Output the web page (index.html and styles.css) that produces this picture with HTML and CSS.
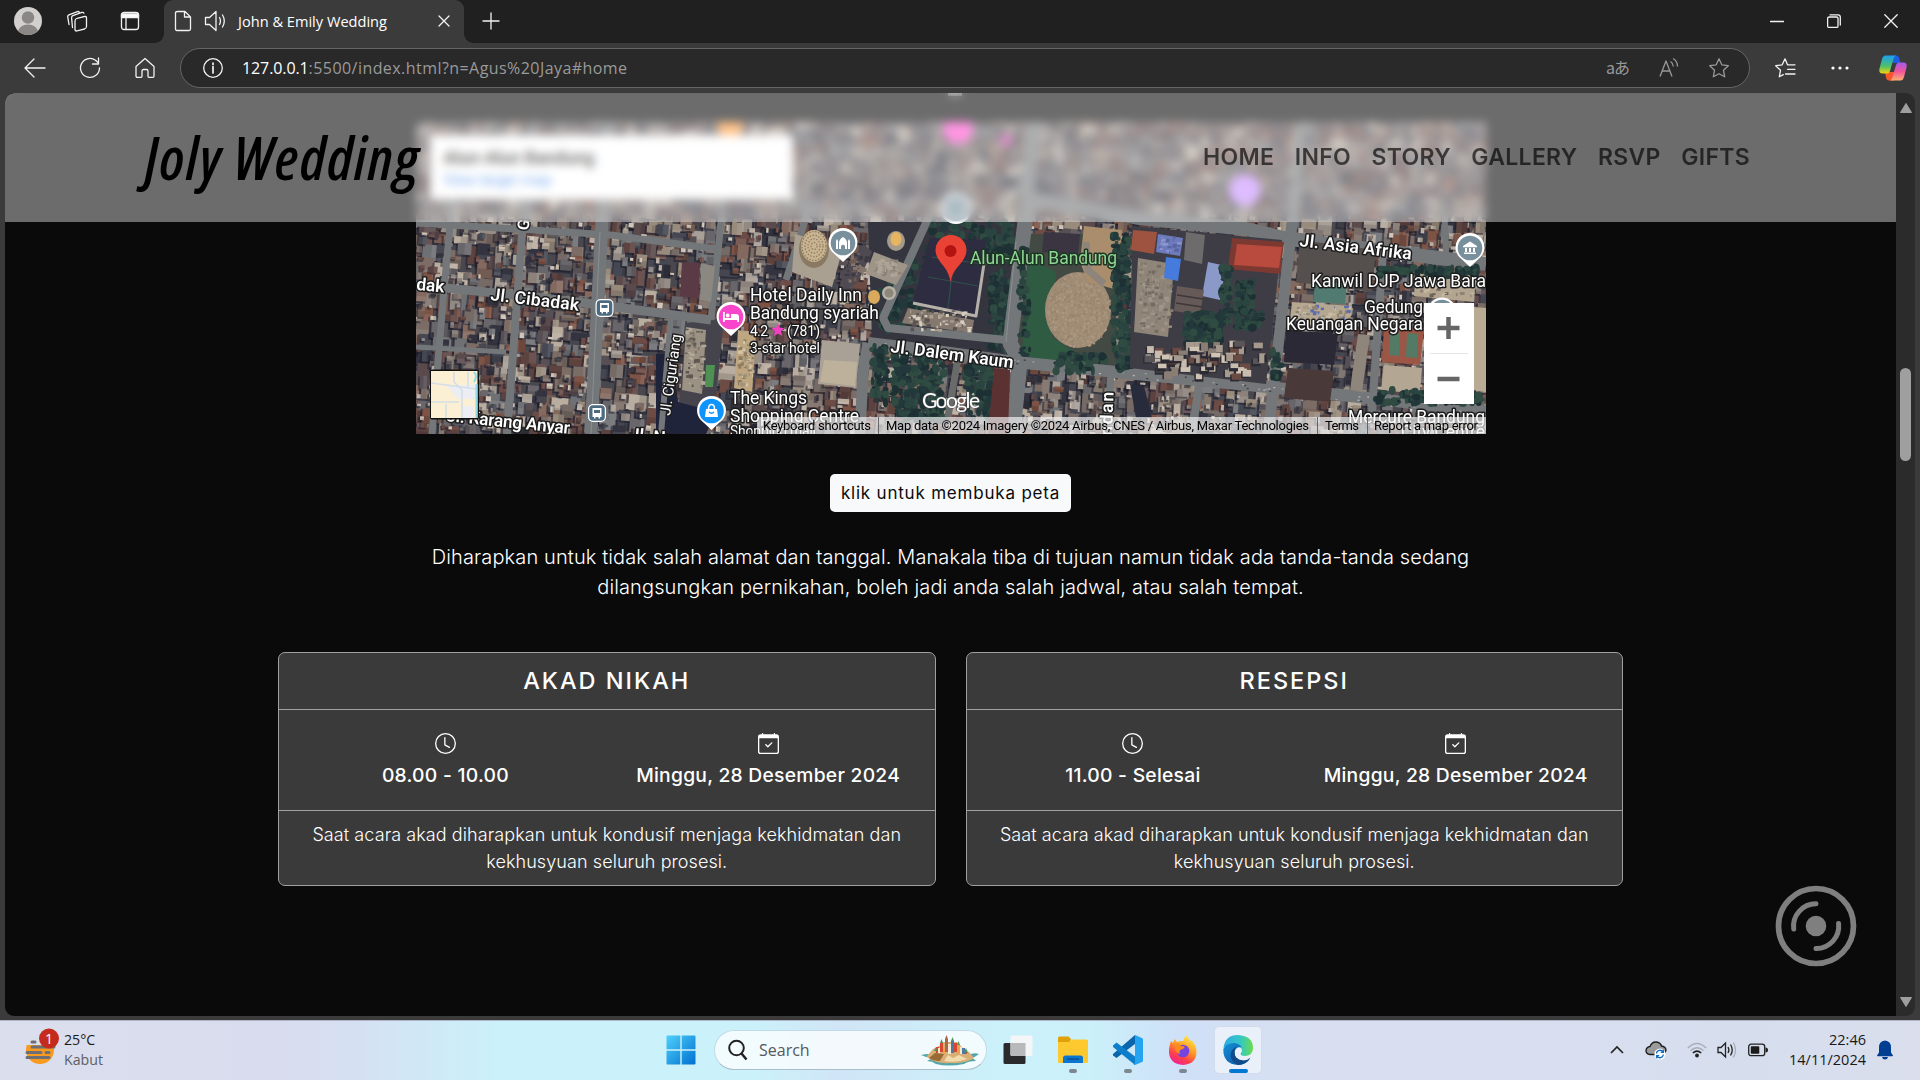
FILE: index.html
```html
<!DOCTYPE html>
<html lang="id">
<head>
<meta charset="utf-8">
<title>John &amp; Emily Wedding</title>
<link rel="stylesheet" href="styles.css">
</head>
<body>
<div class="tabstrip">
  <div class="strip-left">
    <svg width="28" height="28" viewBox="0 0 28 28"><clipPath id="av"><circle cx="14" cy="14" r="14"/></clipPath><g clip-path="url(#av)"><rect width="28" height="28" fill="#d2d0ce"/><circle cx="14" cy="10.5" r="6.2" fill="#8a8784"/><ellipse cx="14" cy="25" rx="10" ry="7.5" fill="#8a8784"/></g></svg>
    <svg class="ln" width="22" height="22" viewBox="0 0 22 22"><rect x="9" y="7.500" width="11.500" height="12.500" rx="2" transform="skewY(-14) translate(0 3.600)"/><path d="M6.500 17.500l-.9-9.600q-.1-1.600 1.300-2.200l9-3.300q1.500-.4 2 .8M3 14.500L1.700 6.800q-.1-1.500 1.200-2L11.500 1.600q1.200-.3 1.700.5"/></svg>
    <svg class="ln" width="20" height="20" viewBox="0 0 20 20"><rect x="1.500" y="1.500" width="17" height="17" rx="2.500"/><path d="M1.500 3h17v3.500h-17zM6 6v12" fill="#fff"/></svg>
  </div>
  <div class="tab">
    <svg class="ln" width="18" height="22" viewBox="0 0 18 22"><path d="M3.500 1.500h7.500l5.500 5.500v12q0 1.500-1.500 1.500H3Q1.500 20.500 1.500 19V3q0-1.500 2-1.500zM10.500 1.500V7h6"/></svg>
    <svg class="ln spk" width="22" height="22" viewBox="0 0 22 22"><path d="M1.500 7.500h4L12 1.500v19l-6.500-6h-4zM15.500 7.500q2 3.500 0 7M18.500 5q3.600 6 0 12"/></svg>
    <span class="tab-title">John &amp; Emily Wedding</span>
    <svg class="ln x" width="12" height="12" viewBox="0 0 12 12"><path d="M1 1l10 10M11 1L1 11"/></svg>
  </div>
  <svg class="ln plus" width="18" height="18" viewBox="0 0 18 18"><path d="M9 1v16M1 9h16"/></svg>
  <div class="winbtns">
    <svg class="ln" width="14" height="14" viewBox="0 0 14 14"><path d="M.5 7.500h13"/></svg>
    <svg class="ln" width="14" height="14" viewBox="0 0 14 14"><rect x=".6" y="3" width="10.400" height="10.400" rx="1.500"/><path d="M3 .8h8q2.300 0 2.300 2.300V11"/></svg>
    <svg class="ln" width="14" height="14" viewBox="0 0 14 14"><path d="M.8.8l12.400 12.400M13.200.8L.8 13.200"/></svg>
  </div>
</div>
<div class="toolbar">
  <div class="navbtns">
    <svg class="ln" width="22" height="22" viewBox="0 0 22 22"><path d="M10 2l-9 9 9 9M1.500 11H21"/></svg>
    <svg class="ln" width="22" height="22" viewBox="0 0 22 22"><path d="M20.500 11A9.500 9.500 0 1 1 16.500 3.200L19.500 6M19.500 1v6h-6"/></svg>
    <svg class="ln" width="22" height="22" viewBox="0 0 22 22"><path d="M2 9.500L11 1.500l9 8V19q0 1.300-1.300 1.300H15q-1 0-1-1V14q0-1.500-1.500-1.500h-3Q8 12.500 8 14v5.300q0 1-1 1H3.300Q2 20.300 2 19z"/></svg>
  </div>
  <div class="address">
    <svg class="ln" width="22" height="22" viewBox="0 0 22 22"><circle cx="11" cy="11" r="9.300"/><path d="M11 9.500V16M11 6v1.500" stroke-width="1.700"/></svg>
    <span class="url"><b>127.0.0.1</b>:5500/index.html?n=Agus%20Jaya#home</span>
    <div class="addr-icons">
      <span class="trans">aあ</span>
      <svg width="22" height="22" viewBox="0 0 22 22"><path d="M2 19.500L8 4l6 15.500M4.300 14h7.500M12.500 4.500q2.500 1.500 2.800 5M15 1.500q4.500 2.500 4.500 8"/></svg>
      <svg width="22" height="22" viewBox="0 0 22 22"><path d="M11 1.800l2.800 6 6.500.9-4.800 4.600 1.200 6.500L11 16.700l-5.700 3.100 1.200-6.500L1.700 8.700l6.500-.9z"/></svg>
    </div>
  </div>
  <div class="tool-right">
    <svg class="ln" width="22" height="22" viewBox="0 0 22 22"><path d="M13.500 7.800L11 1.800l-2.800 6-6.500.9 4.800 4.600-1.200 6.500 4-2.200M13.500 7.800h7.500M13.500 12.300H21M11.500 17H21"/></svg>
    <svg width="18" height="4" viewBox="0 0 18 4" fill="#fff"><circle cx="2" cy="2" r="1.600"/><circle cx="9" cy="2" r="1.600"/><circle cx="16" cy="2" r="1.600"/></svg>
    <svg width="28" height="26" viewBox="0 0 28 26"><defs><linearGradient id="c1" x2="0" y2="1"><stop offset="0" stop-color="#1aa0f0"/><stop offset=".6" stop-color="#4fc06a"/><stop offset="1" stop-color="#f5d50a"/></linearGradient><linearGradient id="c2" x2="0" y2="1"><stop offset="0" stop-color="#a35bf0"/><stop offset=".5" stop-color="#f0559a"/><stop offset="1" stop-color="#ffb070"/></linearGradient></defs><path d="M13 .5h4q2.500 0 3.300 3L21.500 8h-8z" fill="#1d5fe0"/><path d="M15 25.500H10q-2.500 0-3-3L6 17h9z" fill="#f4572c"/><path d="M6.500.5H17q-1.800.8-2.400 3L11 16q-.8 2.500-3 2.500H3.500q-4 0-3-5L3 4Q4 .5 6.500.5z" fill="url(#c1)"/><path d="M21.500 25.500H11q1.800-.8 2.400-3L17 10q.8-2.500 3-2.500h4.500q4 0 3 5L25 22q-1 3.500-3.500 3.500z" fill="url(#c2)"/></svg>
  </div>
</div>

<div class="viewport">
  <main class="page">
    <header class="site-header">
      <div class="brand">Joly Wedding</div>
      <nav><a>HOME</a><a>INFO</a><a>STORY</a><a>GALLERY</a><a>RSVP</a><a>GIFTS</a></nav>
    </header>
    <div class="rule"></div>
    <div class="map">
      <canvas id="sat" width="1070" height="312"></canvas>
      <svg class="labels" width="1070" height="312" viewBox="0 0 1070 312">
        <defs>
          <path id="pin" d="M0 19L-8 11.500A14.500 14.500 0 1 1 8 11.500z" fill="#fff"/>
          <g id="bus"><rect x="-9" y="-9" width="18" height="18" rx="5" fill="#fff"/><rect x="-7.800" y="-7.800" width="15.600" height="15.600" rx="4" fill="#4d6b80"/><path d="M-4.500-5h9v9h-1.500v1.500h-1.500V4h-3v1.500h-1.500V4h-1.500z" fill="#fff"/><path d="M-3-3h6v3h-6z" fill="#4d6b80"/></g>
        </defs>
        <circle cx="540" cy="86" r="16" fill="#fff"/><circle cx="540" cy="86" r="13" fill="#78909c"/>
        <circle cx="542" cy="7" r="15" fill="#ff4fd0"/><circle cx="590" cy="18" r="6" fill="#d03fb0"/>
        <circle cx="829" cy="68" r="16" fill="#c890ff"/><circle cx="314" cy="4" r="13" fill="#ff9a3c"/>
        <g transform="translate(427 121)"><use href="#pin"/><circle r="12.300" fill="#78909c"/><path d="M-7 6v-8l1-2 1 2v8zM5 6v-8l1-2 1 2v8zM-4 6V0q0-3.500 4-6 4 2.500 4 6v6H2V3q-2-2.500-4 0v3z" fill="#fff"/></g>
        <g transform="translate(315 195)"><use href="#pin"/><circle r="12.300" fill="#f846cb"/><path d="M-8-5h1.800v6H0v-4h5q3 0 3 3v5H6.200V3H-6.200v2H-8z" fill="#fff"/><circle cx="-3.300" cy="-1.500" r="1.900" fill="#fff"/></g>
        <g transform="translate(295.500 289)"><use href="#pin"/><circle r="12.300" fill="#0f94fb"/><path d="M-5.500-2h11l1 8h-13z" fill="#fff"/><path d="M-3-2q0-4.500 3-4.500T3-2" fill="none" stroke="#fff" stroke-width="1.500"/><path d="M-2.500 1q2.500 2.500 5 0" fill="none" stroke="#0f94fb" stroke-width="1.300"/></g>
        <g transform="translate(1054 126)"><use href="#pin"/><circle r="12.300" fill="#78909c"/><path d="M-7-2L0-6.500 7-2v1.300H-7zM-6 4.500H6v1.500H-6zM-5 0h2v4h-2zM-1 0h2v4h-2zM3 0h2v4H3z" fill="#fff"/></g>
        <circle cx="1026" cy="190" r="14.500" fill="#fff"/><circle cx="1026" cy="190" r="12.300" fill="#78909c"/>
        <use href="#bus" x="188.500" y="186"/><use href="#bus" x="181" y="291"/>
        <path d="M534.500 160q-1.500-9-7-16-8-9-8-15.500a15.500 15.500 0 0 1 31 0q0 6.500-8 15.500-6.500 7-8 16z" fill="#ea4335"/><circle cx="534.500" cy="129" r="6" fill="#b31412"/>
        <g class="road">
          <text transform="translate(112 109) rotate(-80)" font-size="16">G</text>
          <text transform="translate(0 168) rotate(5)" textLength="28">dak</text>
          <text transform="translate(74 178) rotate(7)" textLength="89">Jl. Cibadak</text>
          <text transform="translate(30 299) rotate(6)" textLength="124">Jl. Karang Anyar</text>
          <text transform="translate(213 318) rotate(6)">Jl. Ny</text>
          <text transform="translate(474 230) rotate(7.500)" textLength="124">Jl. Dalem Kaum</text>
          <text transform="translate(883 124) rotate(7)" textLength="113">Jl. Asia Afrika</text>
          <text transform="translate(696 314) rotate(-88)" textLength="44">ndan</text>
        </g>
        <g class="place">
          <text transform="translate(254 294) rotate(-82)" textLength="82" font-size="15">Jl. Ciguriang</text>
          <text x="334" y="179" textLength="112">Hotel Daily Inn</text><text x="334" y="196.500" textLength="129">Bandung syariah</text>
          <text x="334" y="214" textLength="18" font-size="14">4.2</text><text x="371" y="214" textLength="33" font-size="14">(781)</text>
          <text x="334" y="230.500" textLength="70" font-size="14">3-star hotel</text>
          <text x="314" y="282" textLength="77">The Kings</text><text x="314" y="299.500" textLength="129">Shopping Centre</text><text x="314" y="314" textLength="86" font-size="14">Shopping mall</text>
          <text class="park" x="554" y="142" textLength="147">Alun-Alun Bandung</text>
          <text x="895" y="165" textLength="175">Kanwil DJP Jawa Bara</text>
          <text x="948" y="190.500" textLength="59">Gedung</text><text x="870" y="208" textLength="137">Keuangan Negara</text>
          <text x="932" y="301" textLength="137">Mercure Bandung</text><text x="985" y="316" textLength="84">City Centre</text>
        </g>
        <path d="M362 201l1.900 4.700 4.800.3-3.700 3.200 1.200 4.900-4.200-2.700-4.200 2.700 1.200-4.900-3.700-3.200 4.800-.3z" fill="#f53fc4"/>
        <text class="google" x="506" y="286" textLength="58">Google</text>
        <rect x="341" y="295" width="729" height="17" fill="#f5f5f5" fill-opacity=".68"/>
        <path d="M462.500 295v17M901.500 295v17M951.500 295v17" stroke="#666"/>
        <g class="credit"><text x="347" y="308" textLength="108">Keyboard shortcuts</text><text x="470" y="308" textLength="423">Map data ©2024 Imagery ©2024 Airbus, CNES / Airbus, Maxar Technologies</text><text x="909" y="308" textLength="34">Terms</text><text x="958" y="308" textLength="104">Report a map error</text></g>
        <g><rect x="14" y="247.500" width="49" height="50" rx="2" fill="#111"/><rect x="15" y="249" width="46.500" height="47" fill="#fbf0d3"/><path d="M30 263h31v14H42zM46 284h12v12H46z" fill="#eceef3"/><path d="M15 261l46 6M38 250v10l8 8v28M15 280h28M30 296v-14M52 250v15" stroke="#d5dee6" stroke-width="1.600" fill="none"/><path d="M58 250q4 4 0 10M60.500 262v34" stroke="#8fdbe6" stroke-width="2" fill="none"/></g>
        <g><rect x="1008" y="181" width="50" height="101" fill="#fff"/><path d="M1014 231.500h38" stroke="#e6e6e6"/><path d="M1021.500 206h22M1032.500 195v22M1021.500 257h22" stroke="#666" stroke-width="4.500"/></g>
      </svg>
      <div class="mapcard"><span class="mc-title">Alun-Alun Bandung</span><span class="mc-link">View larger map</span></div>
    </div>
    <a class="mapbtn">klik untuk membuka peta</a>
    <p class="note">Diharapkan untuk tidak salah alamat dan tanggal. Manakala tiba di tujuan namun tidak ada tanda-tanda sedang<br>dilangsungkan pernikahan, boleh jadi anda salah jadwal, atau salah tempat.</p>
    <div class="cards">
      <section class="card">
        <h2>AKAD NIKAH</h2>
        <div class="when">
          <div><svg viewBox="0 0 16 16"><path d="M8 3.500a.5.5 0 0 0-1 0V9a.5.5 0 0 0 .25.43l3.500 2a.5.5 0 0 0 .5-.86L8 8.710z"/><path d="M8 16A8 8 0 1 0 8 0a8 8 0 0 0 0 16m7-8A7 7 0 1 1 1 8a7 7 0 0 1 14 0"/></svg><span>08.00 - 10.00</span></div>
          <div><svg viewBox="0 0 16 16"><path d="M10.850 7.150a.5.5 0 0 1 0 .7l-3 3a.5.5 0 0 1-.7 0l-1.500-1.500a.5.5 0 1 1 .7-.7L7.500 9.790l2.650-2.640a.5.5 0 0 1 .7 0"/><path d="M3.500 0a.5.5 0 0 1 .5.5V1h8V.5a.5.5 0 0 1 1 0V1h1a2 2 0 0 1 2 2v11a2 2 0 0 1-2 2H2a2 2 0 0 1-2-2V3a2 2 0 0 1 2-2h1V.5a.5.5 0 0 1 .5-.5M1 4v10a1 1 0 0 0 1 1h12a1 1 0 0 0 1-1V4z"/></svg><span>Minggu, 28 Desember 2024</span></div>
        </div>
        <p>Saat acara akad diharapkan untuk kondusif menjaga kekhidmatan dan<br>kekhusyuan seluruh prosesi.</p>
      </section>
      <section class="card">
        <h2>RESEPSI</h2>
        <div class="when">
          <div><svg viewBox="0 0 16 16"><path d="M8 3.500a.5.5 0 0 0-1 0V9a.5.5 0 0 0 .25.43l3.500 2a.5.5 0 0 0 .5-.86L8 8.710z"/><path d="M8 16A8 8 0 1 0 8 0a8 8 0 0 0 0 16m7-8A7 7 0 1 1 1 8a7 7 0 0 1 14 0"/></svg><span>11.00 - Selesai</span></div>
          <div><svg viewBox="0 0 16 16"><path d="M10.850 7.150a.5.5 0 0 1 0 .7l-3 3a.5.5 0 0 1-.7 0l-1.500-1.500a.5.5 0 1 1 .7-.7L7.500 9.790l2.650-2.640a.5.5 0 0 1 .7 0"/><path d="M3.500 0a.5.5 0 0 1 .5.5V1h8V.5a.5.5 0 0 1 1 0V1h1a2 2 0 0 1 2 2v11a2 2 0 0 1-2 2H2a2 2 0 0 1-2-2V3a2 2 0 0 1 2-2h1V.5a.5.5 0 0 1 .5-.5M1 4v10a1 1 0 0 0 1 1h12a1 1 0 0 0 1-1V4z"/></svg><span>Minggu, 28 Desember 2024</span></div>
        </div>
        <p>Saat acara akad diharapkan untuk kondusif menjaga kekhidmatan dan<br>kekhusyuan seluruh prosesi.</p>
      </section>
    </div>
    <svg class="disc" width="82" height="82" viewBox="0 0 82 82"><g fill="none" stroke="#7f7f7f"><circle cx="41" cy="41" r="37.500" stroke-width="5.700"/><path d="M41 18.700A22.500 22.500 0 0 0 18.700 44M63.600 38.500A22.500 22.500 0 0 1 41 63.500" stroke-width="5" stroke-linecap="round"/></g><circle cx="41" cy="41" r="10.300" fill="#7f7f7f"/></svg>
  </main>
  <div class="scrollbar">
    <svg width="14" height="12" viewBox="0 0 14 12"><path d="M7 1.500L12.500 10.500h-11z" fill="#9f9f9f" stroke="#9f9f9f" stroke-linejoin="round"/></svg>
    <div class="thumb"></div>
    <svg class="down" width="14" height="12" viewBox="0 0 14 12"><path d="M7 10.500L1.500 1.500h11z" fill="#9f9f9f" stroke="#9f9f9f" stroke-linejoin="round"/></svg>
  </div>
</div>

<div class="taskbar">
  <div class="weather">
    <svg width="36" height="40" viewBox="0 0 36 40"><circle cx="16" cy="22" r="14" fill="#f79a1e"/><path d="M0 0h36v17H0z" fill="#dadeed"/><g stroke="#6d6f74" stroke-width="3" stroke-linecap="round"><path d="M8 14h3M8 19h22M3 24.500h14M22 24.500h3M3 29.500h22"/></g><circle cx="25" cy="10.500" r="10" fill="#c42b1c"/><text x="25" y="15.500" text-anchor="middle" font-size="14" fill="#fff">1</text></svg>
    <div class="wtext"><span>25°C</span><span class="dim">Kabut</span></div>
  </div>
  <div class="apps">
    <svg width="30" height="30" viewBox="0 0 30 30"><defs><linearGradient id="w" x2="1" y2="1"><stop offset="0" stop-color="#4fd0fb"/><stop offset="1" stop-color="#0070d0"/></linearGradient></defs><path d="M.5 1.500q0-1 1-1h12.800v13.800H.5zM15.700.5h12.800q1 0 1 1v12.800H15.700zM.5 15.700h13.800v13.800H1.500q-1 0-1-1zM15.700 15.700h13.800v12.800q0 1-1 1H15.700z" fill="url(#w)"/></svg>
    <div class="search">
      <svg width="20" height="22" viewBox="0 0 20 22" fill="none" stroke="#222" stroke-width="2"><circle cx="8.500" cy="9" r="7.300"/><path d="M13.500 14.500l5 6" stroke-width="2.500"/></svg>
      <span>Search</span>
      <svg width="60" height="32" viewBox="0 0 60 32"><path d="M1 21q8-2 12 0h35q6-3 11-1-4 3-7 4 2 1 4 3-8 0-12 3-16 3-28 0-4-3-9-3 3-1 4-3-6-1-10-3z" fill="#54a5ab"/><path d="M7 22l6-7 6-3 4-4 14 0 6 6 6 4 5 6q-8 6-24 5-15 1-23-6z" fill="#d8b077"/><path d="M9 24l6-5 9 1-4 7q-7 0-11-3z" fill="#9a6a35"/><path d="M24 27l4-6 5 3 6-3 8 4q-10 4-23 2z" fill="#f1dcb0"/><path d="M16 19v-6h3v6zM20 18V9h3v9zM34 18V9h3v9zM45 20v-4h2v4z" fill="#d9472f"/><path d="M25 18V5l1.500-4L28 5v13z" fill="#a8674a"/><path d="M28 20V10h3v10zM18 19v-5h2v5zM40 20v-7h2v7z" fill="#f3ead8"/><path d="M31 19V7h3v12zM42 20v-6h3v6z" fill="#4a7aa5"/><path d="M37 20v-9h3v9zM23 20v-6h2v6z" fill="#f0a050"/><path d="M20 9l1.500-4L23 9zM31 7l1.500-4L34 7zM37 11l1.500-4 1.500 4zM14 17l2-4 1 4zM44 18l2-4 2 5z" fill="#4b9362"/></svg>
    </div>
    <svg class="tv" width="30" height="30" viewBox="0 0 30 30"><rect x=".5" y="8" width="22" height="21" rx="1.500" fill="#2a2a2c"/><rect x="7.500" y=".5" width="22" height="20.500" rx="1.500" fill="#f4f5f6"/><path d="M7.500 8h15v13h-13.500q-1.500 0-1.500-1.500z" fill="#b8b9ba"/></svg>
    <div class="app"><svg width="30" height="28" viewBox="0 0 30 28"><path d="M0 2q0-1.500 1.500-1.500h9L13 3l-2 4H0z" fill="#e0a008"/><path d="M0 6h11l2-2.500h15.500Q30 3.500 30 5v20.500q0 1.500-1.500 1.500h-27Q0 27 0 25.500z" fill="#fdc92f"/><path d="M5 27v-5q0-2.500 2.500-2.500h15q2.500 0 2.500 2.500v5z" fill="#0b76cf"/><path d="M9 23h12" stroke="#084f95" stroke-width="1.500"/></svg><i></i></div>
    <div class="app"><svg width="30" height="30" viewBox="0 0 30 30"><path d="M22 0v9L3.500 23 0 20.500v-1.500z" fill="#0a66ac"/><path d="M0 10.500L3.500 7.500 22 21.500V30L0 12z" fill="#0d7ecb"/><path d="M22 0l7 3q1 .5 1 1.500v21q0 1-1 1.500l-7 3q-1 0-1.500-.5L22 28z" fill="#25a4f2"/></svg><i></i></div>
    <div class="app"><svg width="30" height="30" viewBox="0 0 30 30"><defs><linearGradient id="f" x1=".8" y1="0" x2=".3" y2="1"><stop offset="0" stop-color="#fff44f"/><stop offset=".45" stop-color="#ff9a24"/><stop offset=".75" stop-color="#ff3f4c"/><stop offset="1" stop-color="#f0209a"/></linearGradient></defs><path d="M2 9l1-3 2 2 1.500-4L9 7q3-1.500 6-1Q16.500 2 19 0q.5 3.500 4 6l.5-1q5 5 5 12 0 12-13.500 13Q1.500 29 1 17q0-5 1-8z" fill="url(#f)"/><circle cx="15" cy="16" r="6.300" fill="#7543e0"/><path d="M7 9q4-1 6 2l4 .5q-1 2.500-4 3-2.500 2-1 5Q6 17 7 9z" fill="#ff8a1c"/></svg><i></i></div>
    <div class="app active"><svg width="30" height="30" viewBox="0 0 30 30"><defs><linearGradient id="e1" x2="1"><stop offset="0" stop-color="#2fa9e6"/><stop offset=".6" stop-color="#35c9c0"/><stop offset="1" stop-color="#6bdc4a"/></linearGradient><linearGradient id="e2" x2="1" y2="1"><stop offset="0" stop-color="#1390d8"/><stop offset="1" stop-color="#0c4fa0"/></linearGradient></defs><path d="M.5 13Q2 0 15 0q15 1 15 13 0 7-7.500 8-5 0-5-2.500 1.500-1 1.500-3Q18 10 11 9.500 4 9.500.5 13z" fill="url(#e1)"/><path d="M.3 14Q3 8 11 8q6 .5 7.800 4.500Q13 11 11.500 17q0 8 9 9 4 0 6.500-2.500Q23 30 15 30 0 29 .3 14z" fill="url(#e2)"/><path d="M11.500 17q0 8 9 8.500 4 0 7-3Q23 30 15 30 8 27 7.500 20q.5-6 6-8.500-2 2-2 5.500z" fill="#114a8b"/></svg><i></i></div>
  </div>
  <div class="tray">
    <svg width="14" height="10" viewBox="0 0 14 10" fill="none" stroke="#222" stroke-width="1.600"><path d="M1 8l6-6 6 6"/></svg>
    <svg width="22" height="20" viewBox="0 0 22 20"><path d="M5 14.500Q1 14 1 10.500 1.500 7 5 6.500 7 1.500 11.500 2q4 .5 5 4 4 .5 4.500 4-.5 3.500-4 4.500z" fill="#9b9b9b" stroke="#1f1f1f" stroke-width="1.400"/><circle cx="15" cy="14" r="5.600" fill="#fff"/><path d="M11.500 13.500a3.500 3.500 0 0 1 6.500-1.500M18.300 14.500a3.500 3.500 0 0 1-6.500 1.500M18.300 9.800v2.500h-2.500M11.700 18.200v-2.500h2.500" fill="none" stroke="#0f6cbd" stroke-width="1.300"/></svg>
    <svg class="wifi" width="20" height="16" viewBox="0 0 20 16" fill="none" stroke-width="1.500"><path d="M.8 6q9.200-9 18.400 0M3.500 8.800q6.500-6 13 0" stroke="#a9adba"/><path d="M5.800 11q4.200-3.800 8.400 0" stroke="#222"/><circle cx="10" cy="13.500" r="1.900" fill="#222"/></svg>
    <svg width="20" height="18" viewBox="0 0 20 18" fill="none" stroke="#222" stroke-width="1.300"><path d="M1 6.500h3L8.500 2v14L4 11.500H1zM11 6q1.800 3 0 6M13.500 3.500q3.500 5.500 0 11"/><path d="M16.300 1.500q4.500 7.500 0 15" stroke="#a9adba"/></svg>
    <svg class="bat" width="20" height="14" viewBox="0 0 20 14"><rect x=".7" y="1.200" width="16" height="11.500" rx="2.500" fill="none" stroke="#222" stroke-width="1.300"/><rect x="2.800" y="3.200" width="8.500" height="7.500" rx=".8" fill="#1b1b1b"/><path d="M17.500 4.500q2.500 0 2.500 2.500t-2.500 2.500z" fill="#222"/></svg>
    <div class="clock"><span>22:46</span><span>14/11/2024</span></div>
    <svg width="16" height="20" viewBox="0 0 16 20" fill="#003e92"><path d="M8 .5q6 .5 6 7v5l2 3q0 .8-.8.8H.8q-.8 0-.8-.8l2-3v-5Q2 1 8 .5zM5 17h6q-.5 2.500-3 2.500T5 17z"/></svg>
  </div>
</div>
<script src="map.js"></script>
</body>
</html>
```
FILE: styles.css
```css
* { box-sizing: border-box; }
body { margin: 0; width: 1920px; height: 1080px; overflow: hidden; display: flex; flex-direction: column; background: #3b3b3b; font-family: "Open Sans", "Noto Sans", sans-serif; }
svg { display: block; flex: none; }
.ln { fill: none; stroke: #f2f2f2; stroke-width: 1.3; stroke-linejoin: round; stroke-linecap: round; }

.tabstrip { height: 43px; background: #202020; display: flex; align-items: center; flex: none; padding-bottom: 1px; }
.strip-left { width: 164px; padding-left: 14px; display: flex; align-items: center; gap: 25px; }
.strip-left svg:nth-child(2) { margin-left: -1px; }
.strip-left svg:last-child { margin-left: 7px; }
.tab { width: 300px; height: 43px; margin-bottom: -1px; background: #3b3b3b; border-radius: 9px 9px 0 0; display: flex; align-items: center; padding: 0 14px 1px 10px; position: relative; }
.tab::before, .tab::after { content: ""; position: absolute; bottom: 0; width: 9px; height: 9px; background: radial-gradient(circle at 0 0, #202020 8.5px, #3b3b3b 9px); }
.tab::before { left: -9px; }
.tab::after { right: -9px; background: radial-gradient(circle at 100% 0, #202020 8.5px, #3b3b3b 9px); }
.spk { margin-left: 12px; }
.tab-title { margin-left: 12px; font-size: 14.6px; color: #fff; flex: 1; white-space: nowrap; line-height: 20px; }
.plus { margin-left: 18px; }
.winbtns { margin-left: auto; margin-right: 22px; display: flex; gap: 43px; }

.toolbar { height: 50px; display: flex; align-items: center; flex: none; }
.navbtns { display: flex; gap: 33px; padding-left: 24px; width: 180px; flex: none; }
.address { width: 1570px; height: 40px; border: 1.5px solid #666; border-radius: 20px; background: #292929; display: flex; align-items: center; padding: 0 19px 0 21px; }
.url { margin-left: 18px; font-size: 16px; letter-spacing: .44px; color: #9a9a9a; flex: 1; }
.url b { font-weight: 400; color: #fff; letter-spacing: -.1px; }
.addr-icons { display: flex; align-items: center; gap: 28px; }
.addr-icons svg { fill: none; stroke: #999; stroke-width: 1.3; stroke-linejoin: round; }
.trans { font: 16px "Noto Sans CJK JP", sans-serif; line-height: 22px; color: #999; letter-spacing: -1px; margin-right: 1px; margin-top: -2px; }
.tool-right { display: flex; align-items: center; margin-left: 24px; }
.tool-right svg:nth-child(2) { margin-left: 35px; }
.tool-right svg:nth-child(3) { margin-left: 30px; }

.viewport { height: 923px; margin: 0 5px; display: flex; flex: none; border-radius: 9px; overflow: hidden; }
.page { width: 1891px; background: #0a0a0a; position: relative; display: flex; flex-direction: column; align-items: center; font-family: Inter, sans-serif; color: #fff; overflow: hidden; }
.site-header { position: absolute; inset: 0 0 auto 0; height: 129px; z-index: 5; background: rgba(255,255,255,.4); backdrop-filter: blur(5px); display: flex; align-items: center; justify-content: space-between; padding: 0 146px 0 140px; }
.brand { font: italic 600 59px/80px "Open Sans", sans-serif; font-stretch: 75%; letter-spacing: 1.4px; color: #000; padding-bottom: 1px; white-space: nowrap; }
nav { display: flex; gap: 20.5px; font-size: 23px; font-weight: 600; letter-spacing: .3px; color: rgba(0,0,0,.65); padding-bottom: 1px; }
.rule { height: 3px; width: 14px; margin: 0 0 26px 8px; background: #999; flex: none; }
.map { width: 1070px; height: 312px; position: relative; flex: none; overflow: hidden; }
.map canvas { display: block; }
.labels { position: absolute; left: 0; top: 0; font-family: Roboto, sans-serif; }
.labels text { paint-order: stroke; stroke: #1c1c1c; stroke-width: 3px; stroke-linejoin: round; fill: #fff; }
.road { font-weight: 600; font-size: 17.5px; }
.place { font-size: 17.5px; }
.labels .park { fill: #8fd694; stroke: #1d3324; }
.labels .google { font: 400 21px Lato, sans-serif; stroke: #555; stroke-width: 1px; }
.labels .credit text { font-size: 13px; fill: #000; stroke: none; }
.mapcard { position: absolute; left: 14px; top: 13px; width: 363px; height: 65px; background: #fff; padding: 12px 14px; display: flex; flex-direction: column; font-family: Roboto, sans-serif; }
.mc-title { font-size: 17.5px; font-weight: 500; line-height: 22px; color: #000; }
.mc-link { font-size: 15px; line-height: 22px; color: #1a73e8; }
.mapbtn { margin-top: 40px; width: 241px; height: 38px; border-radius: 5px; background: #f8f9fa; color: #0a0a0a; font-size: 17px; letter-spacing: .8px; line-height: 38px; text-align: center; white-space: nowrap; flex: none; }
.note { margin: 30px 0 0; font-size: 20px; font-weight: 300; line-height: 30px; letter-spacing: .12px; text-align: center; white-space: nowrap; }
.cards { margin-top: 50px; width: 1345px; display: grid; grid-template-columns: 1fr 1fr; gap: 30px; }
.card { height: 234px; border: 1px solid #a0a0a0; border-radius: 7px; background: #3a3a3a; text-align: center; }
.card h2 { margin: 0; height: 57px; border-bottom: 1px solid #a0a0a0; font-size: 23.5px; font-weight: 500; letter-spacing: 2px; line-height: 56px; }
.when { height: 101px; border-bottom: 1px solid #a0a0a0; display: grid; grid-template-columns: 1fr 1fr; padding: 23px 5px 0; font-size: 19.3px; font-weight: 500; letter-spacing: .25px; }
.when svg { width: 21px; height: 21px; fill: #fff; margin: 0 auto 7px; }
.when span { display: block; line-height: 28px; }
.card p { margin: 0; padding-top: 10px; font-size: 18px; font-weight: 300; line-height: 27px; letter-spacing: .08px; white-space: nowrap; }
.disc { position: absolute; right: 39px; bottom: 49px; }
.scrollbar { width: 19px; background: #2b2b2b; display: flex; flex-direction: column; align-items: center; padding: 9px 0 8px; }
.thumb { width: 11px; height: 93px; border-radius: 5.5px; background: #9f9f9f; margin-top: 254px; }
.down { margin-top: auto; }

.taskbar { height: 60px; margin-top: 4px; border-top: 1px solid #aeb4c4; flex: none; position: relative; display: flex; align-items: center; justify-content: space-between; background: linear-gradient(90deg, #dadeed 0, #d9dcee 280px, #d5e0f2 350px, #cbf1fa 500px, #cbf2fa 750px, #d0e5f7 840px, #cbf1fa 1000px, #cbf0fa 1090px, #cfe0f7 1180px, #d9dff0 1320px, #d9dff0 1500px, #d6deee 1750px, #dadeed 1920px); }
.weather { display: flex; align-items: center; gap: 2px; width: 300px; padding-left: 24px; margin-top: -2px; }
.weather svg { margin-top: -4px; }
.wtext { display: flex; flex-direction: column; font-size: 14.2px; line-height: 20px; color: #191919; padding-left: 2px; }
.wtext .dim { color: #5d5f66; }
.apps { position: absolute; left: 666px; top: -1px; height: 59px; display: flex; align-items: center; }
.search { width: 273px; height: 40px; margin: 0 16px 0 18px; border-radius: 20px; background: rgba(255,255,255,.75); border: 1px solid #c0dbe6; border-bottom-color: #a8bfca; display: flex; align-items: center; padding: 0 6px 0 13px; font-size: 16px; color: #55585c; }
.search span { flex: 1; margin-left: 11px; }
.tv { margin-right: 16px; }
.app { width: 48px; height: 48px; margin-right: 7px; border-radius: 5px; display: flex; align-items: center; justify-content: center; position: relative; }
.app i { position: absolute; bottom: 1px; width: 8px; height: 4px; border-radius: 2px; background: #7c8890; }
.app.active { background: #e9f0fa; border: 1px solid #d3dcec; }
.app.active i { width: 19px; background: #0078d4; bottom: 0; }
.tray { margin-left: auto; display: flex; align-items: center; padding: 0 27px 1px 0; }
.tray svg + svg { margin-left: 21px; }
.tray svg.wifi { margin-left: 20px; }
.tray svg.wifi + svg { margin-left: 10px; }
.tray svg.bat { margin-left: 11px; }
.clock { width: 98px; display: flex; flex-direction: column; text-align: right; font-size: 14.5px; line-height: 20px; color: #191919; margin-right: 11px; }
```
FILE: map.js
```js
// Paints the aerial view: a seeded scatter of rooftops, then streets and landmarks on top.
const g = document.getElementById('sat').getContext('2d');
let seed = 41;
const rnd = () => (seed = (seed * 16807) % 2147483647) / 2147483647;
const pick = a => a[Math.floor(rnd() * a.length)];

const poly = (c, ...p) => { g.fillStyle = c; g.beginPath(); for (let i = 0; i < p.length; i += 2) g.lineTo(p[i], p[i + 1]); g.closePath(); g.fill(); };
const line = (c, w, ...p) => { g.strokeStyle = c; g.lineWidth = w; g.beginPath(); for (let i = 0; i < p.length; i += 2) g.lineTo(p[i], p[i + 1]); g.stroke(); };
const oval = (c, x, y, rx, ry) => { g.fillStyle = c; g.beginPath(); g.ellipse(x, y, rx, ry, 0, 0, 7); g.fill(); };

g.fillStyle = '#4a484f';
g.fillRect(0, 0, 1070, 312);
const roofs = ['#6d4c46', '#5d4340', '#7d5346', '#8c827b', '#a89f96', '#564f54', '#7b6d66', '#988b7c', '#68666a', '#756a65', '#83695e', '#5a4a4c', '#b9ad9f', '#33343f', '#454852', '#6e7074'];
// one pass of rooftops at a given lot size; fill is the share of lots built on
const block = (step, min, max, fill, cols) => {
  for (let y = -step; y < 312 + step; y += step) {
    for (let x = -step; x < 1070 + step; x += step) {
      if (rnd() > fill) continue;
      const w = min + rnd() * (max - min), h = min + rnd() * (max - min);
      g.save();
      g.translate(x + rnd() * step * 0.6, y + rnd() * step * 0.6);
      g.rotate(0.07 + (rnd() - 0.5) * 0.06);
      g.fillStyle = 'rgba(24,24,40,.5)';
      g.fillRect(-2, 1, w + 1, h + 1);
      g.fillStyle = pick(cols);
      g.fillRect(0, 0, w, h);
      g.fillStyle = rnd() > 0.5 ? 'rgba(255,255,255,.09)' : 'rgba(0,0,0,.13)';
      if (rnd() > 0.5) g.fillRect(0, h / 2, w, h / 2); else g.fillRect(w / 2, 0, w / 2, h);
      g.restore();
    }
  }
};
block(15, 10, 24, 0.95, roofs);
block(12, 5, 14, 0.6, roofs);
block(10, 2, 6, 0.5, ['#cfc3b5', '#3a3841', '#8e8580', '#6d4c46', '#b7aca2']);

// tree cover: overlapping dark crowns within a rectangle
const trees = (x, y, w, h, n) => { for (let i = 0; i < n; i++) oval(pick(['#22383a', '#2a4440', '#1d3033', '#304b41']), x + rnd() * w, y + rnd() * h, 1.5 + rnd() * 3.5, 1.5 + rnd() * 3.5); };
// fine grain inside a lot
const grain = (x, y, w, h, n, cols) => { for (let i = 0; i < n; i++) { g.fillStyle = pick(cols); g.fillRect(x + rnd() * w, y + rnd() * h, 1 + rnd() * 4, 1 + rnd() * 3); } };

poly('#35353f', 452, 100, 606, 100, 596, 236, 456, 216);
trees(510, 100, 88, 38, 150);
trees(465, 140, 40, 70, 90);
trees(575, 150, 20, 80, 110);
poly('#45444d', 270, 201, 308, 196, 300, 275, 262, 295);
poly('#20243a', 240, 232, 256, 232, 262, 280, 300, 290, 290, 312, 240, 312);
poly('#424a43', 606, 112, 700, 112, 700, 256, 600, 240);
poly('#2f5b43', 612, 135, 640, 150, 636, 215, 672, 240, 650, 250, 606, 232);

const road = '#747779';
g.lineJoin = 'round';
line(road, 13, 192, 0, 186, 100, 175, 312);
line(road, 8, 118, 0, 107, 100, 91, 312);
line(road, 7, 38, 60, 28, 168, 16, 312);
line(road, 9, 0, 163, 60, 169, 162, 180, 295, 198);
line(road, 7, 0, 101, 100, 107, 195, 113, 300, 127);
line(road, 5, 0, 225, 90, 230);
line(road, 7, 312, 0, 305, 100, 295, 198);
line(road, 6, 255, 195, 245, 312);
line(road, 7, 395, 80, 370, 158);
line(road, 8, 515, 90, 467, 196, 472, 206, 600, 219);
line(road, 12, 452, 221, 520, 229, 599, 240, 852, 265, 1070, 289);
line(road, 11, 452, 221, 447, 250, 444, 312);
line(road, 15, 617, 0, 609, 100, 594, 221, 604, 240, 597, 312);
line(road, 14, 610, 76, 724, 96, 831, 107, 867, 116, 1070, 142);
line(road, 11, 886, 0, 874, 121, 852, 312);
line(road, 8, 967, 130, 956, 290);
line(road, 8, 784, 255, 776, 312);
line(road, 7, 695, 250, 691, 312);
line(road, 6, 1028, 80, 1030, 132);
line('#8b8f90', 1, 184, 110, 175, 312);
line('#8b8f90', 1, 600, 120, 590, 220);
for (let i = 0; i < 80; i++) {
  g.fillStyle = pick(['#b5b5b3', '#3c3f45', '#9ea2a3']);
  const t = rnd();
  g.fillRect(452 + t * 618, 219 + t * 68 + rnd() * 7, 2, 1.3);
}

// mosque complex
poly('#aaa092', 379, 112, 427, 126, 416, 165, 376, 150);
oval('#8a7a63', 398, 127, 15, 19);
oval('#c9b491', 398, 124, 13, 16);
g.strokeStyle = '#8b795d'; g.lineWidth = 1.2; g.setLineDash([1.5, 1.5]);
for (let r = 3; r < 14; r += 3) { g.beginPath(); g.ellipse(398, 124, r, r * 1.2, 0, 0, 7); g.stroke(); }
g.setLineDash([]);
poly('#9e9488', 458, 130, 492, 143, 480, 163, 450, 152);
grain(458, 137, 24, 16, 40, ['#8b8176', '#aea597']);
oval('#a59b8c', 480, 119, 9, 10); oval('#e5b561', 480, 117, 5.5, 7);
oval('#d9a95e', 458, 175, 6, 7); oval('#b7b2a6', 473, 171, 7, 7); oval('#8d877b', 473, 171, 4.5, 4.5);
poly('#4f4a52', 424, 152, 448, 122, 456, 130, 442, 160, 428, 168);
grain(428, 130, 22, 28, 50, ['#6f5a52', '#3c3842', '#85766c']);

// city square
poly('#2d2c40', 514, 116, 570, 118, 562, 193, 497, 180);
line('#31504a', 1.2, 516, 135, 566, 142); line('#31504a', 1.2, 512, 155, 562, 164); line('#31504a', 1.2, 540, 118, 532, 186);
line('#b5b1a8', 3, 569, 135, 560, 194, 497, 181);
poly('#85796f', 492, 186, 558, 198, 556, 211, 486, 201);
grain(492, 187, 60, 20, 80, ['#a99d8e', '#5b5350', '#d8cfbf']);

// warehouses, yards and courts
poly('#593a45', 266, 140, 284, 141, 283, 177, 264, 174);
poly('#8b8781', 285, 141, 299, 144, 295, 180, 284, 178);
poly('#aaa196', 406, 218, 444, 222, 440, 266, 402, 262);
poly('#beb19c', 408, 238, 441, 240, 439, 264, 404, 260);
poly('#9c9284', 270, 205, 290, 208, 286, 272, 266, 268);
grain(269, 206, 17, 60, 60, ['#b3a999', '#7a7167', '#5f5852']);
poly('#4e9152', 290, 243, 299, 243, 297, 265, 289, 265);
poly('#bda680', 322, 208, 340, 212, 336, 270, 318, 266);
grain(321, 210, 16, 56, 60, ['#d6c6a6', '#8d7c62', '#a3937a']);

// playing field and plaza
oval('#a08c75', 662, 188, 33, 38);
for (let i = 0; i < 500; i++) {
  const a = rnd() * 6.28, r = Math.sqrt(rnd());
  g.fillStyle = pick(['#ad9982', '#98846e', '#a6937d']);
  g.fillRect(662 + Math.cos(a) * r * 32, 188 + Math.sin(a) * r * 37, 2, 2);
}
poly('#a98d6d', 668, 104, 706, 108, 702, 168, 672, 160, 664, 140);
line('#8d857b', 7, 670, 120, 672, 148, 688, 162);
poly('#3a3541', 628, 110, 664, 112, 662, 132, 626, 130);
trees(697, 112, 18, 125, 160);
trees(604, 118, 10, 115, 45);
trees(640, 232, 50, 18, 60);
trees(700, 220, 16, 28, 30);

// civic blocks
poly('#3e3d45', 716, 104, 866, 118, 850, 262, 714, 246);
poly('#9d5340', 717, 108, 741, 110, 738, 132, 715, 128);
poly('#6d7bbd', 742, 112, 767, 116, 764, 134, 740, 130);
grain(742, 114, 20, 16, 20, ['#8b96cf', '#58659f']);
poly('#8f8578', 722, 136, 758, 142, 752, 215, 718, 210);
grain(722, 140, 32, 68, 130, ['#9d9284', '#857b70', '#a1968a', '#736a61']);
poly('#457bdc', 750, 135, 765, 137, 762, 159, 748, 156);
poly('#6d6b6c', 770, 110, 789, 113, 786, 142, 768, 138);
poly('#8b99c8', 792, 140, 810, 144, 804, 178, 786, 174);
poly('#655a57', 761, 164, 788, 168, 784, 193, 758, 189);
line('#3d3739', 1.5, 761, 173, 787, 177); line('#3d3739', 1.5, 760, 181, 786, 185);
poly('#7c3932', 816, 116, 868, 120, 864, 152, 812, 147);
poly('#b94a3e', 821, 122, 866, 125, 863, 146, 818, 143);
oval('#243b3b', 787, 208, 20, 20); trees(769, 190, 36, 34, 70);
trees(820, 160, 17, 46, 80); trees(836, 190, 10, 16, 18); trees(806, 145, 8, 60, 45);
for (let i = 0; i < 75; i++) {
  const x = 722 + rnd() * 122, y = 218 + rnd() * 34;
  g.fillStyle = '#2c2b34'; g.fillRect(x - 1.500, y + 1, 9, 7);
  g.fillStyle = pick(['#c8bcae', '#a69a8e', '#6a4b43', '#5a5558', '#cfc4b4', '#8a7d74']); g.fillRect(x, y, 5 + rnd() * 6, 4 + rnd() * 5);
}
poly('#55504d', 884, 118, 960, 128, 956, 170, 880, 160);
poly('#517b70', 899, 161, 931, 161, 929, 182, 897, 180);
poly('#b6a890', 876, 180, 936, 184, 934, 202, 874, 198);
grain(876, 182, 58, 18, 70, ['#c9bda6', '#8f8474', '#5b6bb0', '#a59a86']);
poly('#2a2935', 870, 208, 922, 212, 918, 243, 868, 240);
poly('#4a3939', 872, 246, 918, 249, 914, 280, 868, 276);
poly('#8e857b', 942, 212, 954, 213, 946, 270, 934, 268);
poly('#9b5646', 968, 205, 1008, 208, 1004, 243, 966, 240);
poly('#537a64', 974, 210, 984, 211, 983, 234, 973, 233);
poly('#537a64', 991, 211, 1002, 212, 1001, 236, 990, 235);
poly('#b3a793', 968, 243, 1006, 246, 1004, 272, 965, 268);
poly('#b3a590', 1000, 147, 1060, 154, 1058, 180, 998, 174);
grain(1000, 152, 56, 22, 40, ['#c5b8a2', '#8d8272', '#6c6459']);
poly('#b9aa93', 1058, 185, 1070, 186, 1070, 270, 1056, 268);
trees(962, 146, 100, 7, 70); trees(960, 268, 105, 14, 90); trees(856, 228, 8, 30, 20);

// south park
trees(476, 232, 52, 66, 230);
trees(456, 222, 14, 60, 60);
line('#686b69', 7, 542, 236, 532, 295);
trees(550, 240, 28, 55, 100);
poly('#5b3132', 578, 246, 594, 248, 592, 312, 572, 312);
poly('#282b3b', 714, 262, 728, 264, 736, 296, 720, 296);
```
